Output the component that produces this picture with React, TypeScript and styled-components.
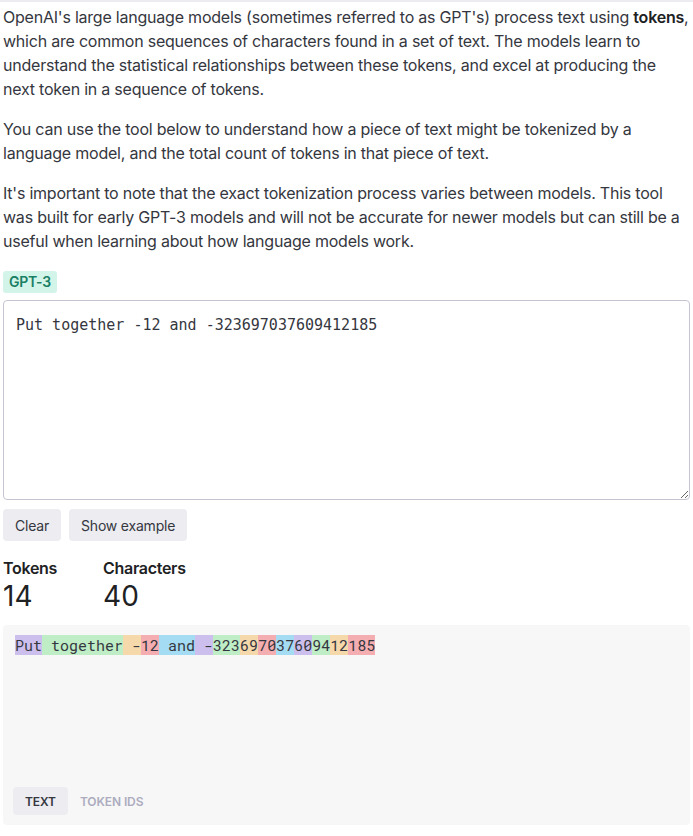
import React from "react";
import styled, { createGlobalStyle } from "styled-components";

const Global = createGlobalStyle`
  html, body { margin: 0; padding: 0; background: #fff; }
  body { font-family: Inter, "Noto Sans", sans-serif; color: #353740; }
  * { box-sizing: border-box; }
`;

const Page = styled.div`
  border-top: 2px solid #ececf1;
  padding: 3px 3px 10px 3px;
  display: flex;
  flex-direction: column;
`;

const Para = styled.p`
  margin: 0 0 16px 0;
  font-size: 16px;
  line-height: 24px;
  letter-spacing: -0.22px;
  color: #353740;
  b { font-weight: 600; color: #202123; }
`;

const Badge = styled.div`
  align-self: flex-start;
  margin-top: 2px;
  margin-bottom: 7px;
  background: #d2f4e9;
  color: #1a7f64;
  font-size: 14px;
  font-weight: 600;
  letter-spacing: -0.3px;
  line-height: 22px;
  padding: 0 6px;
  border-radius: 3px;
`;

const Input = styled.textarea`
  width: 100%;
  height: 200px;
  border: 1px solid #c5c5d2;
  border-radius: 4px;
  padding: 12px 12px;
  font-family: "DejaVu Sans Mono", monospace;
  font-size: 15px;
  line-height: 24px;
  color: #353740;
  resize: vertical;
  outline: none;
  display: block;
`;

const ButtonRow = styled.div`
  display: flex;
  gap: 8px;
  margin-top: 9px;
`;

const Button = styled.button`
  background: #ececf1;
  border: none;
  border-radius: 4px;
  font-family: Inter, "Noto Sans", sans-serif;
  font-size: 14px;
  letter-spacing: -0.2px;
  color: #353740;
  height: 32px;
  padding: 0 12px;
`;

const Stats = styled.div`
  display: flex;
  gap: 46px;
  margin-top: 16px;
`;

const Stat = styled.div`
  display: flex;
  flex-direction: column;
`;

const StatLabel = styled.div`
  font-size: 16px;
  font-weight: 600;
  letter-spacing: -0.3px;
  line-height: 22px;
  color: #202123;
`;

const StatValue = styled.div`
  font-size: 28px;
  line-height: 34px;
  font-weight: 400;
  color: #202123;
`;

const Output = styled.div`
  margin-top: 12px;
  background: #f7f7f8;
  border-radius: 4px;
  height: 200px;
  padding: 11px 12px 10px 12px;
  display: flex;
  flex-direction: column;
  justify-content: space-between;
`;

const TokenLine = styled.div`
  font-family: "Roboto Mono", "DejaVu Sans Mono", monospace;
  font-size: 15px;
  line-height: 18px;
  color: #353740;
  white-space: pre;
`;

const colors = [
  "rgba(107,64,216,.3)",
  "rgba(104,222,122,.4)",
  "rgba(244,172,54,.4)",
  "rgba(239,65,70,.4)",
  "rgba(39,181,234,.4)",
];

const Token = styled.span<{ $c: number }>`
  background: ${(p) => colors[p.$c % colors.length]};
`;

const Tabs = styled.div`
  display: flex;
  gap: 0;
  margin-left: -2px;
`;

const Tab = styled.button<{ $active?: boolean }>`
  border: none;
  border-radius: 4px;
  background: ${(p) => (p.$active ? "#ececf1" : "transparent")};
  color: ${(p) => (p.$active ? "#353740" : "#acacbe")};
  font-family: Inter, "Noto Sans", sans-serif;
  font-size: 12px;
  font-weight: 600;
  height: 28px;
  padding: 0 12px;
  letter-spacing: -0.1px;
`;

const tokens = [
  "Put",
  " together",
  " -",
  "12",
  " and",
  " -",
  "323",
  "69",
  "70",
  "37",
  "60",
  "94",
  "12",
  "185",
];

export default function App() {
  return (
    <>
      <Global />
      <Page>
        <Para>
          OpenAI's large language models (sometimes referred to as GPT's) process text using <b>tokens</b>, which are
          common sequences of characters found in a set of text. The models learn to understand the statistical
          relationships between these tokens, and excel at producing the next token in a sequence of tokens.
        </Para>
        <Para>
          You can use the tool below to understand how a piece of text might be tokenized by a language model, and the
          total count of tokens in that piece of text.
        </Para>
        <Para>
          It's important to note that the exact tokenization process varies between models. This tool was built for
          early GPT-3 models and will not be accurate for newer models but can still be a useful when learning about how
          language models work.
        </Para>
        <Badge>GPT-3</Badge>
        <Input defaultValue="Put together -12 and -323697037609412185" />
        <ButtonRow>
          <Button>Clear</Button>
          <Button>Show example</Button>
        </ButtonRow>
        <Stats>
          <Stat>
            <StatLabel>Tokens</StatLabel>
            <StatValue>14</StatValue>
          </Stat>
          <Stat>
            <StatLabel>Characters</StatLabel>
            <StatValue>40</StatValue>
          </Stat>
        </Stats>
        <Output>
          <TokenLine>
            {tokens.map((t, i) => (
              <Token key={i} $c={i}>
                {t}
              </Token>
            ))}
          </TokenLine>
          <Tabs>
            <Tab $active>TEXT</Tab>
            <Tab>TOKEN IDS</Tab>
          </Tabs>
        </Output>
      </Page>
    </>
  );
}
